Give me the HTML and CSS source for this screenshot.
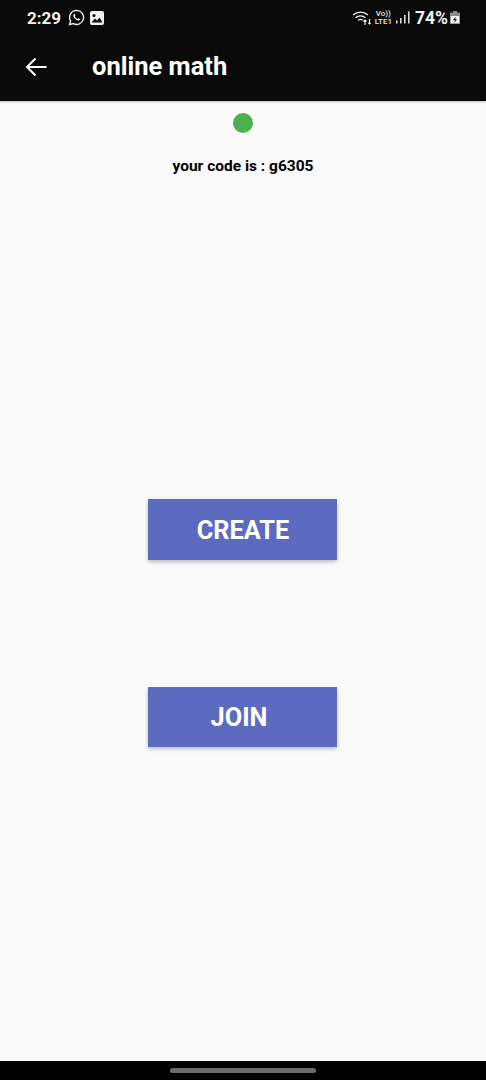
FILE: index.html
```html
<!DOCTYPE html>
<html lang="en">
<head>
<meta charset="utf-8">
<title>online math</title>
<link rel="stylesheet" href="styles.css">
</head>
<body>
<div class="screen">
  <header class="header">
    <div class="status">
      <div class="status-left">
        <span class="time">2:29</span>
        <svg class="ic-wa" width="17" height="17" viewBox="0 0 17 17"><path d="M8.600 1.400a7 7 0 0 0-6 10.600L1.600 15.600l3.700-1A7 7 0 1 0 8.600 1.400z" fill="none" stroke="#f2f2f2" stroke-width="1.400"/><path d="M6.200 4.900c-.5.300-1 1-.9 1.900.2 1.600 2.800 4.500 4.800 4.800.9.100 1.700-.5 2-1.100.1-.3 0-.5-.2-.6l-1.500-.7c-.2-.1-.4 0-.5.100l-.5.600c-.9-.3-2-1.300-2.500-2.300l.4-.6c.1-.1.100-.3 0-.5L6.800 5c-.1-.2-.4-.2-.6-.1z" fill="#f2f2f2"/></svg>
        <svg class="ic-img" width="14" height="14" viewBox="0 0 14 14"><rect width="14" height="14" rx="2" fill="#f2f2f2"/><circle cx="4" cy="4.500" r="1.500" fill="#0a0a0a"/><path d="M1.500 11.500 5 7.500l2 2 2.500-3 3 5z" fill="#0a0a0a"/></svg>
      </div>
      <div class="status-right">
        <svg width="20" height="16" viewBox="0 0 20 16" fill="none" stroke="#f0f0f0" stroke-width="1.200"><path d="M1 5a11 11 0 0 1 15 0"/><path d="M3.500 7.800a7.500 7.500 0 0 1 10 0"/><path d="M6 10.400a4 4 0 0 1 5 0"/><path d="M13 15V10M11.500 11.500 13 10l1.500 1.500"/><path d="M17.500 9v5M16.300 12.800 17.500 14l1.200-1.200"/></svg>
        <div class="volte"><span>Vo))</span><span>LTE1</span></div>
        <svg class="bars" width="14" height="13" viewBox="0 0 14 13" fill="#d8d8d8"><rect x="0" y="9.500" width="1.600" height="3"/><rect x="4" y="7" width="1.600" height="5.500"/><rect x="8" y="4" width="1.600" height="8.500"/><rect x="12" y="0.500" width="1.600" height="12"/></svg>
        <span class="pct">74%</span>
        <svg width="10" height="13" viewBox="0 0 10 13"><path d="M3 0h4v1.500h3V13H0V1.500h3z" fill="#8a8a8a"/><path d="M0.800 5h8.400v7.200H0.800z" fill="#f2f2f2"/><path d="M5.600 5.800 3 9h1.800l-.4 2.400L7 8.200H5.200z" fill="#0a0a0a"/></svg>
      </div>
    </div>
    <div class="toolbar">
      <svg class="back" width="22" height="20" viewBox="0 0 22 20" fill="none" stroke="#fff" stroke-width="2"><path d="M21.500 10H2M10.500 1.500 2 10l8.500 8.500"/></svg>
      <h1 class="title">online math</h1>
    </div>
  </header>
  <main class="content">
    <div class="dot"></div>
    <p class="code">your code is : g6305</p>
    <button class="btn btn-create">CREATE</button>
    <button class="btn btn-join"><span class="join-label">JOIN</span></button>
  </main>
  <footer class="navbar"><div class="handle"></div></footer>
</div>
</body>
</html>
```
FILE: styles.css
```css
* { box-sizing: border-box; }
html, body { margin: 0; padding: 0; }
body { font-family: Roboto, "Liberation Sans", sans-serif; background: #fafafa; }
.screen { width: 486px; height: 1080px; display: flex; flex-direction: column; overflow: hidden; }
.header { height: 101px; background: #0a0a0a; color: #fff; flex: none; box-shadow: 0 1px 2px rgba(0,0,0,.25); position: relative; }
.status { height: 34px; display: flex; justify-content: space-between; align-items: center; padding: 1px 26px 0 27px; }
.status-left { display: flex; align-items: center; }
.time { font-size: 17px; font-weight: 700; color: #f2f2f2; }
.ic-wa { margin-left: 7px; }
.ic-img { margin-left: 5px; }
.status-right { display: flex; align-items: center; }
.volte { display: flex; flex-direction: column; align-items: center; font-size: 8px; line-height: 8px; font-weight: 500; color: #e8e8e8; margin-left: 3px; }
.bars { margin-left: 4px; }
.pct { font-size: 17.500px; font-weight: 700; color: #f2f2f2; margin-left: 5px; margin-right: 2px; }
.toolbar { height: 66px; display: flex; align-items: center; padding: 0 0 0 25px; }
.title { margin: 0 0 2px 45px; font-size: 25.500px; font-weight: 700; line-height: 30px; }
.content { flex: 1; display: flex; flex-direction: column; align-items: center; }
.dot { width: 20px; height: 20px; border-radius: 50%; background: #4caf50; margin-top: 12px; }
.code { margin: 23px 0 0; font-size: 15.500px; font-weight: 700; line-height: 20px; color: #000; }
.btn { width: 189px; height: 60.500px; margin-right: 1px; border: 0; border-radius: 0; background: #5c6bc0; color: #fff; font-family: inherit; font-size: 25.300px; font-weight: 700; padding: 2px 0 0 1px; box-shadow: 0 2px 4px rgba(0,0,0,.25); }
.btn-create { margin-top: 323px; }
.btn-join { margin-top: 127px; }
.join-label { display: block; padding-right: 8px; }
.navbar { height: 19px; flex: none; background: #000; display: flex; justify-content: center; padding-top: 7px; }
.handle { width: 146px; height: 5px; border-radius: 3px; background: #6c6c6c; }
```
